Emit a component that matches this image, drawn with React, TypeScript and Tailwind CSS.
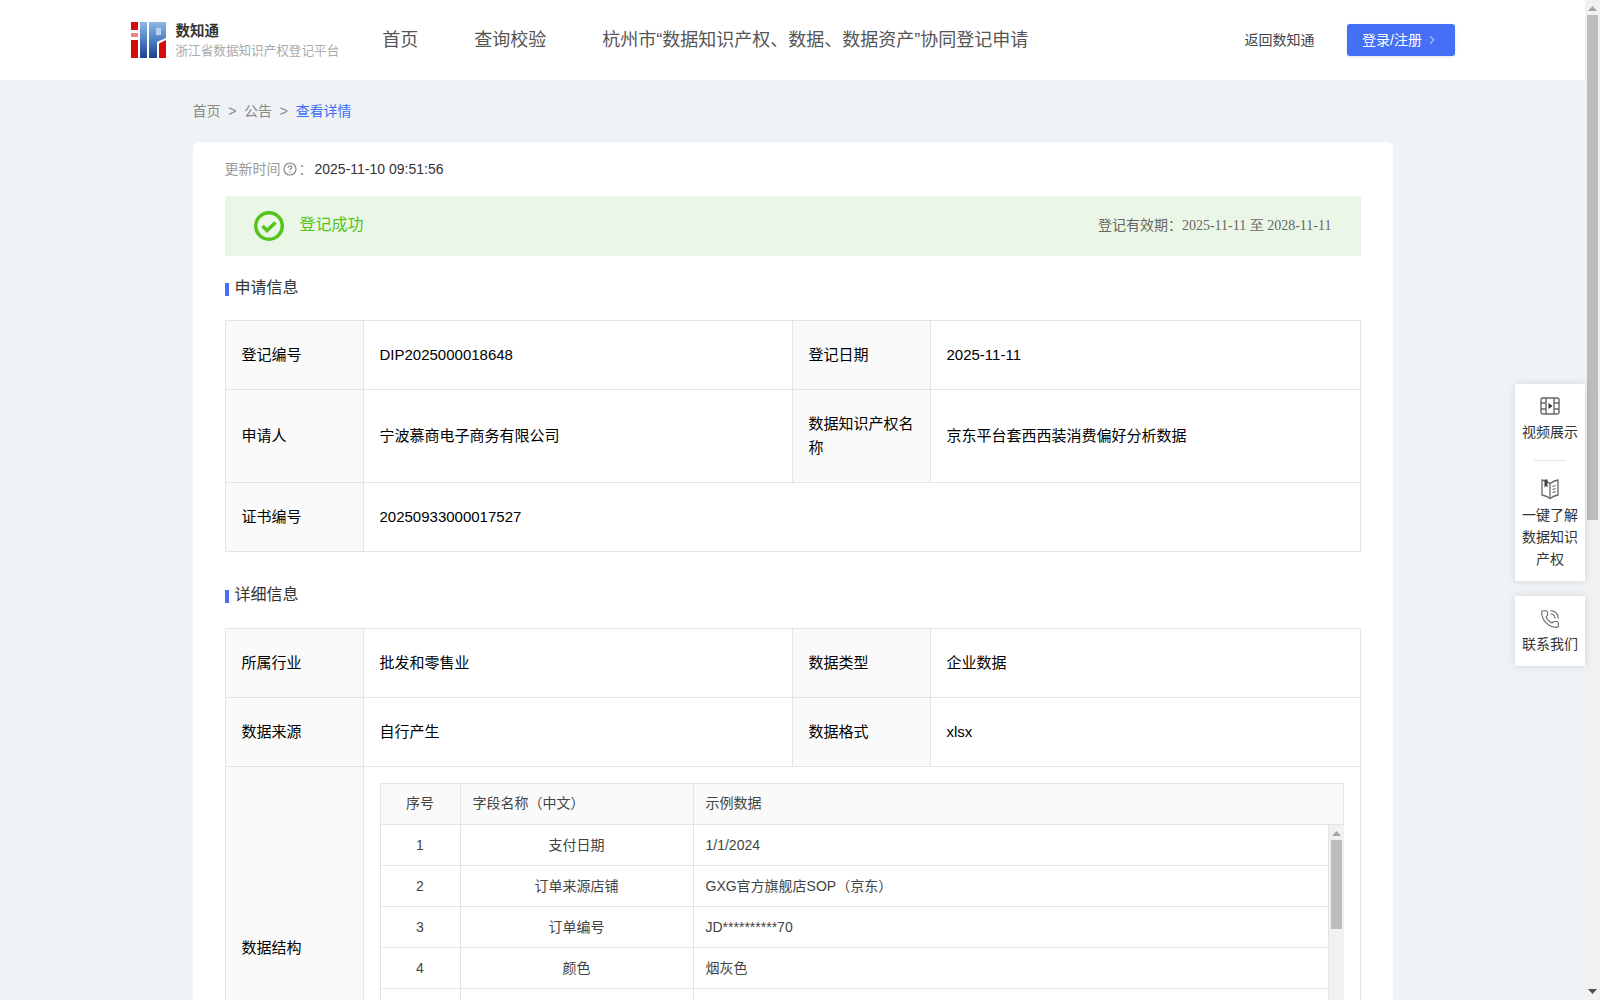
import { ChevronRight, PhoneCall } from "lucide-react";

const font = { fontFamily: '"Liberation Sans", "Noto Sans CJK SC", sans-serif' };

const Logo = () => (
  <svg width="35" height="36" viewBox="0 0 35 36" className="shrink-0">
    <defs>
      <linearGradient id="ipBlue" x1="0" y1="0" x2="0" y2="1">
        <stop offset="0" stopColor="#8db8e8" />
        <stop offset="0.5" stopColor="#4f80c4" />
        <stop offset="1" stopColor="#1f3f8f" />
      </linearGradient>
    </defs>
    <rect x="0" y="0" width="7" height="8" fill="#d60b0b" />
    <rect x="0" y="11" width="7" height="4" fill="#e98585" />
    <rect x="0" y="18" width="7" height="18" fill="#d60b0b" />
    <rect x="9" y="0" width="7" height="36" fill="url(#ipBlue)" />
    <path d="M18 0h17v16l-9 4v16h-8z" fill="url(#ipBlue)" />
    <path d="M25 6h5v7h-5z" fill="#b9d2ef" />
    <path d="M35 18v18h-7V21.500z" fill="#d60b0b" />
  </svg>
);

const VideoIcon = () => (
  <svg width="20" height="20" viewBox="0 0 20 20" fill="none" stroke="#666" strokeWidth="1.4">
    <rect x="1" y="2" width="18" height="16" rx="2" />
    <path d="M6 2v16M14 2v16M1 7h5M1 13h5M14 7h5M14 13h5" />
    <path d="M8.500 7l4 3-4 3z" fill="#333" stroke="none" />
  </svg>
);

const BookIcon = () => (
  <svg width="20" height="22" viewBox="0 0 20 22" fill="none" stroke="#666" strokeWidth="1.3">
    <path d="M10 5.500C8 4 5 2.500 2 2v15c3 .5 6 2 8 3.500 2-1.500 5-3 8-3.500V2c-3 .5-6 2-8 3.500z" />
    <path d="M10 5.500v15" />
    <path d="M4.500 1.500h3v8l-1.500-1.500-1.500 1.500z" fill="#444" stroke="none" />
    <path d="M12.500 8.500l3-1M12.500 11.500l3-1M12.500 14.500l3-1" />
  </svg>
);

const ScrollBtn = ({ up }: { up: boolean }) => (
  <svg width="9" height="5" viewBox="0 0 9 5" className="shrink-0">
    <path d={up ? "M4.500 0L9 5H0z" : "M0 0h9L4.500 5z"} fill={up ? "#a3a3a3" : "#505050"} />
  </svg>
);

const SectionTitle = ({ children }: { children: string }) => (
  <div className="flex items-center h-8 text-base text-[#333]">
    <span className="w-1 h-[13px] bg-[#4570f5] mr-[6px] mt-[3px]" />
    {children}
  </div>
);

const Colgroup = () => (
  <colgroup>
    <col className="w-[138px]" />
    <col className="w-[429px]" />
    <col className="w-[138px]" />
    <col className="w-[430px]" />
  </colgroup>
);

const Label = ({ children, h }: { children: string; h: string }) => (
  <td className={`${h} border border-[#e4e4e4] bg-[#fafafa] px-4 text-[15px] leading-[24px] text-black`}>{children}</td>
);

const Value = ({ children, colSpan }: { children: string; colSpan?: number }) => (
  <td colSpan={colSpan} className="border border-[#e4e4e4] px-4 text-[15px] leading-[24px] text-black">
    {children}
  </td>
);

const fields = [
  ["1", "支付日期", "1/1/2024"],
  ["2", "订单来源店铺", "GXG官方旗舰店SOP（京东）"],
  ["3", "订单编号", "JD**********70"],
  ["4", "颜色", "烟灰色"],
  ["", "", ""],
  ["", "", ""],
  ["", "", ""],
];

const FieldTable = () => (
  <div className="h-[330px] text-sm text-[#444]">
    <table className="w-[964px] table-fixed border-collapse">
      <colgroup>
        <col className="w-[80px]" />
        <col className="w-[233px]" />
        <col />
      </colgroup>
      <thead>
        <tr className="h-[41px] bg-[#fafafa]">
          <th className="border border-[#e4e4e4] font-normal pb-[2px]">序号</th>
          <th className="border border-[#e4e4e4] font-normal text-left px-3 pb-[2px]">字段名称（中文）</th>
          <th className="border border-[#e4e4e4] font-normal text-left px-3 pb-[2px]">示例数据</th>
        </tr>
      </thead>
    </table>
    <div className="flex h-[289px] overflow-hidden">
      <table className="w-[949px] h-fit table-fixed border-collapse">
        <colgroup>
          <col className="w-[80px]" />
          <col className="w-[233px]" />
          <col />
        </colgroup>
        <tbody>
          {fields.map((f, i) => (
            <tr key={i} className={i === 0 ? "h-[40px]" : "h-[41px]"}>
              <td className="border border-t-0 border-[#e4e4e4] text-center">{f[0]}</td>
              <td className="border border-t-0 border-[#e4e4e4] text-center">{f[1]}</td>
              <td className="border border-t-0 border-[#e4e4e4] px-3">{f[2]}</td>
            </tr>
          ))}
        </tbody>
      </table>
      <div className="w-[15px] bg-[#f1f1f1] flex flex-col items-center pt-[6px]">
        <ScrollBtn up />
        <div className="w-[11px] h-[89px] bg-[#bdbdbd] mt-[4px]" />
      </div>
    </div>
  </div>
);

const Scrollbar = () => (
  <div className="w-[15px] h-[1000px] bg-[#f1f1f1] flex flex-col items-center pt-[6px]">
    <ScrollBtn up />
    <div className="w-[11px] h-[505px] bg-[#bdbdbd] mt-[4px]" />
    <div className="mt-auto mb-[6px]">
      <ScrollBtn up={false} />
    </div>
  </div>
);

const SideWidgets = () => (
  <div className="absolute left-[1515px] top-[384px] w-[70px] text-sm text-[#333] text-center">
    <div className="bg-white shadow-[0_0_8px_rgba(0,0,0,0.12)] pt-[12px] pb-[11px]">
      <div className="flex justify-center">
        <VideoIcon />
      </div>
      <div className="leading-[22px] mt-[5px]">视频展示</div>
      <div className="w-8 h-px bg-[#e5e5e5] mx-auto mt-[17px] mb-[17px]" />
      <div className="flex justify-center">
        <BookIcon />
      </div>
      <div className="leading-[22px] mt-[4px] px-1">一键了解数据知识产权</div>
    </div>
    <div className="bg-white shadow-[0_0_8px_rgba(0,0,0,0.12)] mt-[15px] pt-[13px] h-[70px]">
      <div className="flex justify-center">
        <PhoneCall className="w-5 h-5 text-[#666]" strokeWidth={1.3} />
      </div>
      <div className="leading-[22px] mt-[4px]">联系我们</div>
    </div>
  </div>
);

export default function App() {
  return (
    <div className="relative flex h-[1000px] overflow-hidden bg-[#eff3f6]" style={font}>
      <div className="flex-1 min-w-0">
        <header className="h-20 bg-white">
          <div className="mx-auto w-[1324px] h-full flex items-center">
            <Logo />
            <div className="ml-[10px] mr-[43px] pt-[1px]">
              <div className="text-[14.5px] font-bold leading-[18px] text-[#333]">数知通</div>
              <div className="text-[12.6px] leading-[18px] mt-[2px] text-[#aaa]">浙江省数据知识产权登记平台</div>
            </div>
            <nav className="flex gap-14 text-lg text-[#555]">
              <span>首页</span>
              <span>查询校验</span>
              <span>杭州市“数据知识产权、数据、数据资产”协同登记申请</span>
            </nav>
            <span className="ml-auto text-sm text-[#444]">返回数知通</span>
            <button className="ml-8 w-[108px] h-8 rounded-[3px] bg-[#4570f5] text-sm text-white flex items-center justify-center gap-[3px] shadow-[0_1px_3px_rgba(0,0,0,0.12)]">
              登录/注册
              <ChevronRight className="w-3.5 h-3.5" strokeWidth={1.6} />
            </button>
          </div>
        </header>

        <main className="mx-auto w-[1200px]">
          <div className="h-[61px] mb-[1px] flex items-center gap-[7.7px] text-sm text-[#888]">
            <span>首页</span>
            <span>&gt;</span>
            <span>公告</span>
            <span>&gt;</span>
            <span className="text-[#3b6cf6]">查看详情</span>
          </div>

          <section className="bg-white rounded-md px-8 pb-6">
            <div className="h-[54px] flex items-center text-sm text-[#999]">
              更新时间
              <svg width="14" height="14" viewBox="0 0 14 14" fill="none" stroke="#888" strokeWidth="1.2" className="mx-[2px]">
                <circle cx="7" cy="7" r="6" />
                <path d="M5.200 5.500c0-2.300 3.600-2.300 3.600 0 0 1.300-1.800 1.300-1.800 2.700M7 9.500v1.200" />
              </svg>
              ：<span className="text-[#333] ml-[2px]">2025-11-10 09:51:56</span>
            </div>

            <div className="h-[60px] bg-[#ebf7e6] flex items-center pl-[29px] pr-[29px]">
              <svg width="30" height="30" viewBox="0 0 30 30" fill="none" stroke="#52c41a">
                <circle cx="15" cy="15" r="13.250" strokeWidth="3.500" />
                <path d="M8.500 15l4.500 4.500 8.500-8" strokeWidth="3.500" />
              </svg>
              <span className="ml-[16px] mb-[2px] text-base text-[#52c41a]">登记成功</span>
              <span className="ml-auto mb-[2px] text-sm text-[#666]">
                登记有效期：<span className="font-['Liberation_Serif']">2025-11-11 至 2028-11-11</span>
              </span>
            </div>

            <div className="mt-[16px] mb-[16px]">
              <SectionTitle>申请信息</SectionTitle>
            </div>
            <table className="w-[1135px] table-fixed border-collapse">
              <Colgroup />
              <tbody>
                <tr>
                  <Label h="h-[69px]">登记编号</Label>
                  <Value>DIP2025000018648</Value>
                  <Label h="h-[69px]">登记日期</Label>
                  <Value>2025-11-11</Value>
                </tr>
                <tr>
                  <Label h="h-[93px]">申请人</Label>
                  <Value>宁波慕商电子商务有限公司</Value>
                  <Label h="h-[93px]">数据知识产权名称</Label>
                  <Value>京东平台套西西装消费偏好分析数据</Value>
                </tr>
                <tr>
                  <Label h="h-[69px]">证书编号</Label>
                  <Value colSpan={3}>20250933000017527</Value>
                </tr>
              </tbody>
            </table>

            <div className="mt-[27px] mb-[17px]">
              <SectionTitle>详细信息</SectionTitle>
            </div>
            <table className="w-[1135px] table-fixed border-collapse">
              <Colgroup />
              <tbody>
                <tr>
                  <Label h="h-[69px]">所属行业</Label>
                  <Value>批发和零售业</Value>
                  <Label h="h-[69px]">数据类型</Label>
                  <Value>企业数据</Value>
                </tr>
                <tr>
                  <Label h="h-[69px]">数据来源</Label>
                  <Value>自行产生</Value>
                  <Label h="h-[69px]">数据格式</Label>
                  <Value>xlsx</Value>
                </tr>
                <tr>
                  <Label h="h-[362px]">数据结构</Label>
                  <td colSpan={3} className="border border-[#e4e4e4] p-4">
                    <FieldTable />
                  </td>
                </tr>
              </tbody>
            </table>
          </section>
        </main>
      </div>
      <Scrollbar />
      <SideWidgets />
    </div>
  );
}
